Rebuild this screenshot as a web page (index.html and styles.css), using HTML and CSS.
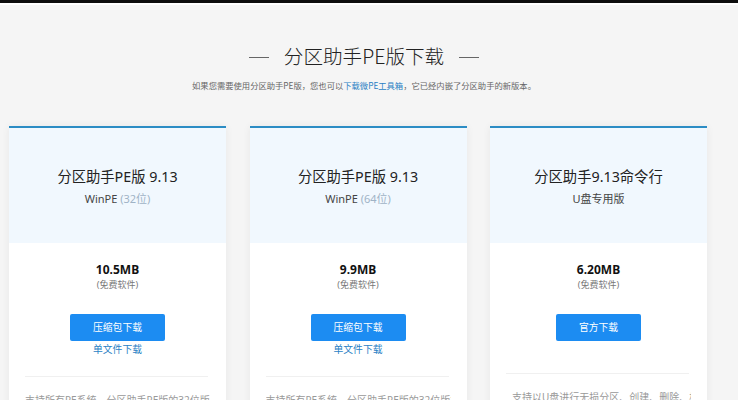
FILE: index.html
```html
<!DOCTYPE html>
<html lang="zh-CN">
<head>
<meta charset="utf-8">
<title>分区助手PE版下载</title>
<link rel="stylesheet" href="styles.css">
</head>
<body>
<div class="topbar"></div>
<main class="page">
  <h1 class="title"><span class="dash"></span><span class="title-text">分区助手PE版下载</span><span class="dash"></span></h1>
  <p class="subtitle">如果您需要使用分区助手PE版，您也可以<a class="sub-link" href="#">下载微PE工具箱</a>，它已经内嵌了分区助手的新版本。</p>
  <div class="cards">
    <section class="card">
      <div class="card-head">
        <div class="card-title">分区助手PE版 9.13</div>
        <div class="card-sub">WinPE <span class="bits">(32位)</span></div>
      </div>
      <div class="card-body">
        <div class="size">10.5MB</div>
        <div class="free">(免费软件)</div>
        <a class="btn" href="#">压缩包下载</a>
        <a class="alt-link" href="#">单文件下载</a>
        <div class="divider"></div>
        <p class="desc">支持所有PE系统，分区助手PE版的32位版本也可以</p>
      </div>
    </section>
    <section class="card">
      <div class="card-head">
        <div class="card-title">分区助手PE版 9.13</div>
        <div class="card-sub">WinPE <span class="bits">(64位)</span></div>
      </div>
      <div class="card-body">
        <div class="size">9.9MB</div>
        <div class="free">(免费软件)</div>
        <a class="btn" href="#">压缩包下载</a>
        <a class="alt-link" href="#">单文件下载</a>
        <div class="divider"></div>
        <p class="desc">支持所有PE系统，分区助手PE版的32位版本也可以</p>
      </div>
    </section>
    <section class="card">
      <div class="card-head">
        <div class="card-title">分区助手9.13命令行</div>
        <div class="card-sub">U盘专用版</div>
      </div>
      <div class="card-body">
        <div class="size">6.20MB</div>
        <div class="free">(免费软件)</div>
        <a class="btn btn-narrow" href="#">官方下载</a>
        <div class="divider divider-far"></div>
        <p class="desc desc-inset">支持以U盘进行无损分区、创建、删除、格式化</p>
      </div>
    </section>
  </div>
</main>
</body>
</html>
```

FILE: styles.css
```css
* { box-sizing: border-box; }
html, body {
  margin: 0;
  padding: 0;
  background: #f5f5f5;
  font-family: "Noto Sans", "Noto Sans CJK SC", sans-serif;
  color: #333;
  overflow: hidden;
}
.topbar {
  height: 5px;
  background: #fff;
  border-top: 3px solid #0d0d0d;
}
.page {
  padding: 37px 0 0 9px;
  width: 738px;
}
.title {
  margin: 0;
  width: 710px;
  display: flex;
  justify-content: center;
  align-items: center;
  gap: 15px;
  font-size: 19.6px;
  line-height: 28px;
  font-weight: 300;
  color: #222;
  font-family: "Noto Sans CJK SC", sans-serif;
}
.dash {
  width: 20px;
  height: 1px;
  background: #666;
  margin-top: 2px;
}
.subtitle {
  margin: 9px 0 0;
  width: 710px;
  text-align: center;
  font-size: 8.3px;
  line-height: 12px;
  color: #666;
  font-family: "Noto Sans CJK SC", sans-serif;
}
.sub-link {
  color: #2a7fc4;
  text-decoration: none;
}
.cards {
  margin-top: 35px;
  display: grid;
  grid-template-columns: 217px 217px 217px;
  column-gap: 23.5px;
}
.card {
  background: #fff;
  border-top: 2px solid #2b8cc4;
  box-shadow: 0 0 8px rgba(0, 0, 0, 0.06);
  height: 300px;
}
.card-head {
  background: #f1f8fe;
  height: 115px;
  padding-top: 39px;
  text-align: center;
}
.card-title {
  font-size: 14.3px;
  line-height: 20px;
  color: #222;
}
.card-sub {
  margin-top: 4px;
  font-size: 11px;
  line-height: 16px;
  color: #444;
}
.bits {
  color: #9fb3c6;
}
.card-body {
  padding-top: 19px;
  display: flex;
  flex-direction: column;
  align-items: center;
}
.size {
  font-size: 12px;
  line-height: 16px;
  font-weight: 700;
  color: #111;
}
.free {
  font-size: 9px;
  line-height: 14px;
  color: #777;
}
.btn {
  margin-top: 22px;
  width: 95px;
  height: 27px;
  background: #1c8cf2;
  border-radius: 2px;
  color: #fff;
  font-size: 9.8px;
  line-height: 27px;
  text-align: center;
  text-decoration: none;
}
.btn-narrow {
  width: 85px;
}
.alt-link {
  margin-top: 2px;
  font-size: 9.8px;
  line-height: 14px;
  color: #2a7fc4;
  text-decoration: none;
}
.divider {
  margin-top: 19px;
  align-self: stretch;
  margin-left: 16px;
  margin-right: 18px;
  height: 1px;
  background: #f0f0f0;
}
.divider-far {
  margin-top: 32px;
}
.desc {
  margin: 15px 0 0;
  font-size: 10px;
  line-height: 16px;
  color: #999;
  white-space: nowrap;
  overflow: hidden;
  width: 185px;
}
.desc-inset {
  padding-left: 6px;
}
```
